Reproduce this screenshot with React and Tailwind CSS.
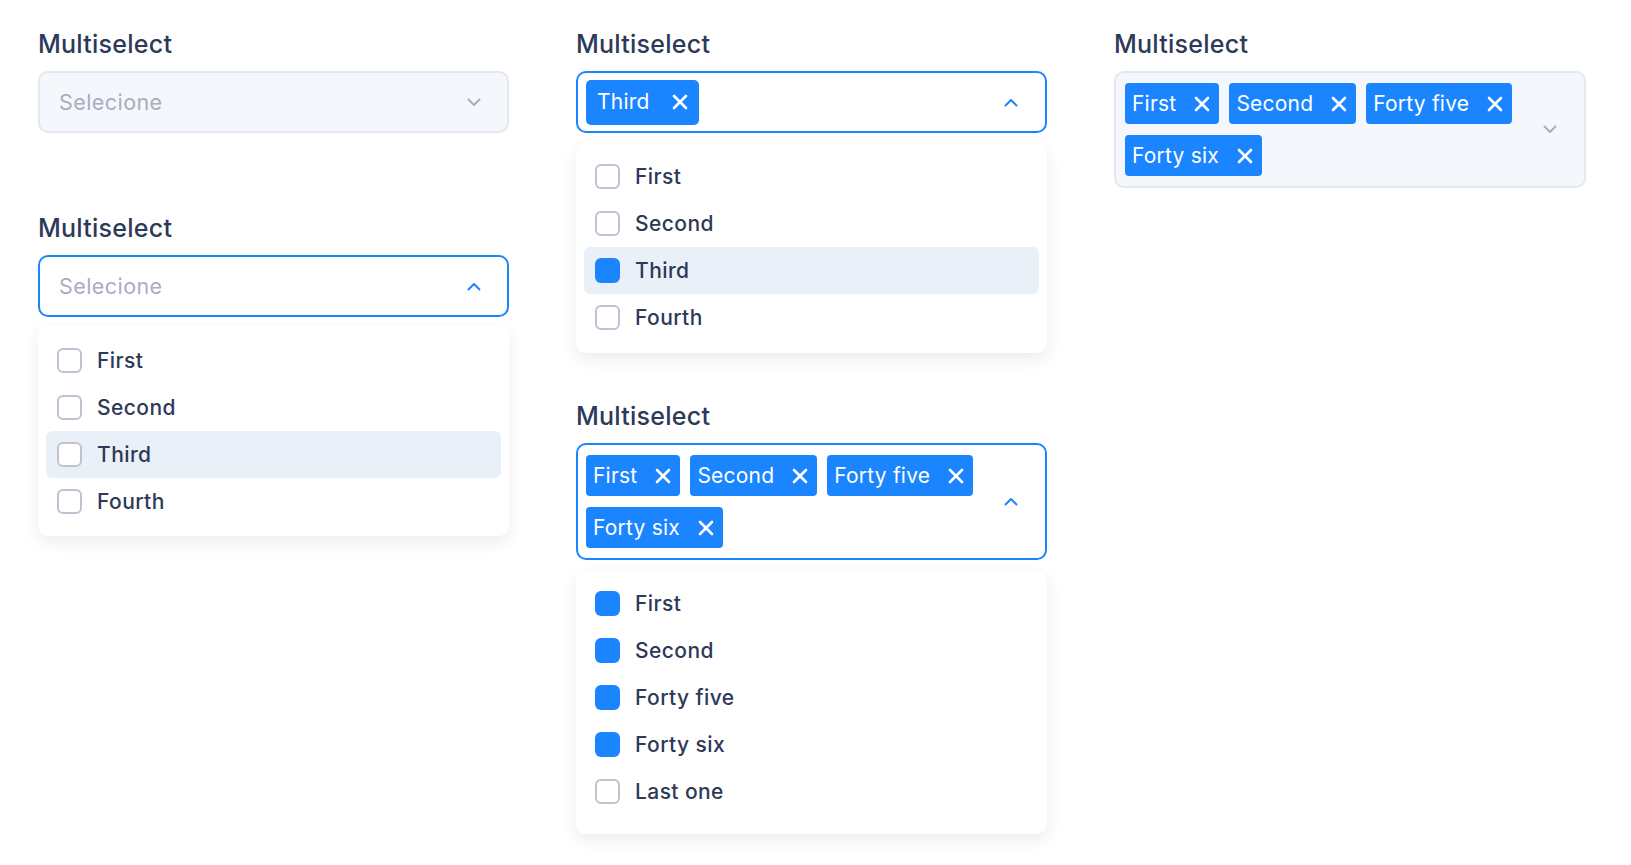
import React from "react";

// chevron used at the right side of every select box
const Chevron = ({ up, muted }) => (
  <svg width="14" height="9" viewBox="0 0 14 9" fill="none">
    <path
      d={up ? "M1.5 7.5L7 2l5.5 5.5" : "M1.5 1.5L7 7l5.5-5.5"}
      stroke={muted ? "#a9adbf" : "#1b84ff"}
      strokeWidth="2"
      strokeLinecap="round"
      strokeLinejoin="round"
    />
  </svg>
);

const XIcon = () => (
  <svg width="16" height="16" viewBox="0 0 16 16" fill="none">
    <path
      d="M2 2l12 12M14 2L2 14"
      stroke="white"
      strokeWidth="2.6"
      strokeLinecap="round"
    />
  </svg>
);

const Label = () => (
  <p className="h-[32px] leading-[32px] text-[25px] font-medium tracking-[0.01em] text-[#2d3958] mb-[11px]">
    Multiselect
  </p>
);

const Tag = ({ label }) => (
  <span className="flex items-center h-[41px] rounded-[4px] bg-[#1b84ff] pl-[7px] pr-[9px] gap-[18px] text-white text-[21px] tracking-[0.01em]">
    {label}
    <XIcon />
  </span>
);

const Checkbox = ({ checked }) =>
  checked ? (
    <span className="w-[25px] h-[25px] rounded-[6px] bg-[#1b84ff] shrink-0" />
  ) : (
    <span className="w-[25px] h-[25px] rounded-[6px] border-2 border-[#bfc3d1] bg-white shrink-0" />
  );

const Option = ({ label, checked, active }) => (
  <div
    className={`flex items-center h-[47px] rounded-[6px] pl-[11px] gap-[15px] text-[21px] font-medium tracking-[0.02em] text-[#2d3958] ${
      active ? "bg-[#e9f0f7]" : ""
    }`}
  >
    <Checkbox checked={checked} />
    {label}
  </div>
);

const Dropdown = ({ children, className }) => (
  <div
    className={`rounded-[10px] bg-white px-[8px] shadow-[0_6px_16px_rgba(30,40,70,0.09)] ${className}`}
  >
    {children}
  </div>
);

const App = () => {
  return (
    <div
      className="min-h-screen bg-white pt-[28px] pl-[38px]"
      style={{ fontFamily: "Inter, 'Noto Sans', sans-serif" }}
    >
      <div className="grid grid-cols-[471px_471px_472px] gap-x-[67px] items-start">
        {/* Column 1 */}
        <div className="flex flex-col">
          <Label />
          <div className="h-[62px] rounded-[10px] border-2 border-[#e3e8ef] bg-[#f4f7fb] flex items-center justify-between pl-[19px] pr-[26px]">
            <span className="text-[21.5px] tracking-[0.02em] text-[#a9adbf]">Selecione</span>
            <Chevron muted />
          </div>

          <div className="mt-[79px]">
            <Label />
          </div>
          <div className="h-[62px] rounded-[10px] border-2 border-[#1b84ff] bg-white flex items-center justify-between pl-[19px] pr-[26px]">
            <span className="text-[21.5px] tracking-[0.02em] text-[#a9adbf]">Selecione</span>
            <Chevron up />
          </div>
          <Dropdown className="mt-[9px] py-[11px]">
            <Option label="First" />
            <Option label="Second" />
            <Option label="Third" active />
            <Option label="Fourth" />
          </Dropdown>
        </div>

        {/* Column 2 */}
        <div className="flex flex-col">
          <Label />
          <div className="h-[62px] rounded-[10px] border-2 border-[#1b84ff] bg-white flex items-center justify-between pl-[8px] pr-[27px]">
            <span className="flex items-center h-[45px] rounded-[5px] bg-[#1b84ff] pl-[11px] pr-[11px] gap-[22px] text-white text-[21px] tracking-[0.01em]">
              Third
              <XIcon />
            </span>
            <Chevron up />
          </div>
          <Dropdown className="mt-[10px] pt-[10px] pb-[12px]">
            <Option label="First" />
            <Option label="Second" />
            <Option label="Third" checked active />
            <Option label="Fourth" />
          </Dropdown>

          <div className="mt-[47px]">
            <Label />
          </div>
          <div className="h-[117px] rounded-[10px] border-2 border-[#1b84ff] bg-white flex items-center justify-between pl-[8px] pr-[27px]">
            <div className="flex flex-wrap gap-x-[10px] gap-y-[11px] w-[400px]">
              <Tag label="First" />
              <Tag label="Second" />
              <Tag label="Forty five" />
              <Tag label="Forty six" />
            </div>
            <Chevron up />
          </div>
          <Dropdown className="mt-[10px] pt-[10px] pb-[19px]">
            <Option label="First" checked />
            <Option label="Second" checked />
            <Option label="Forty five" checked />
            <Option label="Forty six" checked />
            <Option label="Last one" />
          </Dropdown>
        </div>

        {/* Column 3 */}
        <div className="flex flex-col">
          <Label />
          <div className="h-[117px] rounded-[10px] border-2 border-[#e3e8ef] bg-[#f4f7fb] flex items-center justify-between pl-[9px] pr-[27px]">
            <div className="flex flex-wrap gap-x-[10px] gap-y-[11px] w-[400px]">
              <Tag label="First" />
              <Tag label="Second" />
              <Tag label="Forty five" />
              <Tag label="Forty six" />
            </div>
            <Chevron muted />
          </div>
        </div>
      </div>
    </div>
  );
};

export default App;
